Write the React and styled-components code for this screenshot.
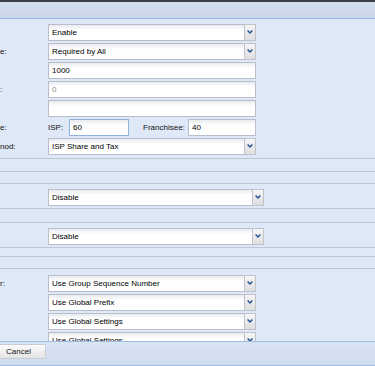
import React from 'react';
import styled, { createGlobalStyle } from 'styled-components';

const GlobalStyle = createGlobalStyle`
  html, body {
    margin: 0;
    padding: 0;
    background: #dfe8f6;
    overflow: hidden;
  }
  body {
    font-family: "Liberation Sans", Arial, sans-serif;
    font-size: 8px;
  }
`;

const Window = styled.div`
  width: 375px;
  height: 366px;
  box-sizing: border-box;
  display: flex;
  flex-direction: column;
  background: #dfe8f6;
  border-top: 2px solid #3c3f44;
  overflow: hidden;
`;

const Header = styled.div`
  flex: none;
  height: 16px;
  background: linear-gradient(#d4dfed, #cbd8e9);
  border-bottom: 1px solid #99bbe8;
`;

const Body = styled.div`
  flex: 1;
  overflow: hidden;
`;

const Fieldset = styled.div`
  border-top: ${(p) => (p.$noTop ? 'none' : '1px solid #bac6d7')};
  border-bottom: 1px solid #bac6d7;
  margin-top: ${(p) => p.$gap || 0}px;
  padding-top: ${(p) => p.$pt || 0}px;
  padding-bottom: ${(p) => p.$pb || 0}px;
  min-height: ${(p) => (p.$collapsed ? 11 : 0)}px;
`;

const Row = styled.div`
  display: flex;
  align-items: center;
  height: 17px;
  margin-bottom: 2px;
`;

const Label = styled.div`
  flex: none;
  width: 48px;
  color: #111;
  white-space: nowrap;
`;

const InlineLabel = styled.div`
  flex: none;
  width: ${(p) => p.$w}px;
  margin-left: ${(p) => p.$ml || 0}px;
  color: #111;
  white-space: nowrap;
`;

const TextBox = styled.div`
  flex: none;
  box-sizing: border-box;
  width: ${(p) => p.$w}px;
  height: 17px;
  padding: 0 3px;
  display: flex;
  align-items: center;
  border: 1px solid ${(p) => (p.$focus ? '#8fb3dc' : '#b9bdcc')};
  background: linear-gradient(#e9ebef, #ffffff 5px);
  color: ${(p) => (p.$disabled ? '#8c8c8c' : '#000')};
  white-space: nowrap;
`;

const Combo = styled.div`
  flex: none;
  display: flex;
  width: ${(p) => p.$w}px;
  height: 17px;
`;

const ComboText = styled.div`
  flex: 1;
  box-sizing: border-box;
  padding: 0 3px;
  display: flex;
  align-items: center;
  border: 1px solid #b9bdcc;
  border-right: none;
  background: linear-gradient(#e9ebef, #ffffff 5px);
  color: #000;
  white-space: nowrap;
`;

const Trigger = styled.div`
  flex: none;
  box-sizing: border-box;
  width: 12px;
  display: flex;
  justify-content: center;
  padding-top: 5px;
  border: 1px solid #bfc2cc;
  background: linear-gradient(#f6f6f6, #dedede);
`;

const Footer = styled.div`
  flex: none;
  height: 21px;
  padding-top: 2px;
  background: linear-gradient(#d9e4f3, #d0ddef);
  border-top: 1px solid #9ebde4;
  border-bottom: 1px solid #9ebde4;
`;

const Button = styled.div`
  box-sizing: border-box;
  width: 46px;
  height: 15px;
  padding-left: 6px;
  display: flex;
  align-items: center;
  border: 1px solid #c9ccd2;
  border-left: none;
  border-radius: 0 2px 2px 0;
  background: linear-gradient(#fbfbfb, #e4e4e4);
  color: #111;
`;

function Chevron() {
  return (
    <svg width="6" height="4" viewBox="0 0 6 4">
      <path d="M0.6 0.6 L3 3 L5.4 0.6" fill="none" stroke="#1d4f91" strokeWidth="1.4" />
    </svg>
  );
}

function Select({ value, width = 208 }) {
  return (
    <Combo $w={width}>
      <ComboText>{value}</ComboText>
      <Trigger>
        <Chevron />
      </Trigger>
    </Combo>
  );
}

export default function App() {
  return (
    <>
      <GlobalStyle />
      <Window>
        <Header />
        <Body>
          <Fieldset $noTop $pt={5} $pb={1}>
            <Row>
              <Label />
              <Select value="Enable" />
            </Row>
            <Row>
              <Label>e:</Label>
              <Select value="Required by All" />
            </Row>
            <Row>
              <Label />
              <TextBox $w={208}>1000</TextBox>
            </Row>
            <Row>
              <Label>:</Label>
              <TextBox $w={208} $disabled>0</TextBox>
            </Row>
            <Row>
              <Label />
              <TextBox $w={208} />
            </Row>
            <Row>
              <Label>e:</Label>
              <InlineLabel $w={21}>ISP:</InlineLabel>
              <TextBox $w={60} $focus>60</TextBox>
              <InlineLabel $w={45} $ml={14}>Franchisee:</InlineLabel>
              <TextBox $w={68}>40</TextBox>
            </Row>
            <Row>
              <Label>nod:</Label>
              <Select value="ISP Share and Tax" />
            </Row>
          </Fieldset>

          <Fieldset $gap={12} $collapsed />

          <Fieldset $noTop $pt={5}>
            <Row>
              <Label />
              <Select value="Disable" width={216} />
            </Row>
          </Fieldset>

          <Fieldset $gap={13} $pt={5}>
            <Row>
              <Label />
              <Select value="Disable" width={216} />
            </Row>
          </Fieldset>

          <Fieldset $gap={8} $collapsed />

          <Fieldset $noTop $pt={6}>
            <Row>
              <Label>r:</Label>
              <Select value="Use Group Sequence Number" />
            </Row>
            <Row>
              <Label />
              <Select value="Use Global Prefix" />
            </Row>
            <Row>
              <Label />
              <Select value="Use Global Settings" />
            </Row>
            <Row>
              <Label />
              <Select value="Use Global Settings" />
            </Row>
          </Fieldset>
        </Body>
        <Footer>
          <Button>Cancel</Button>
        </Footer>
      </Window>
    </>
  );
}
